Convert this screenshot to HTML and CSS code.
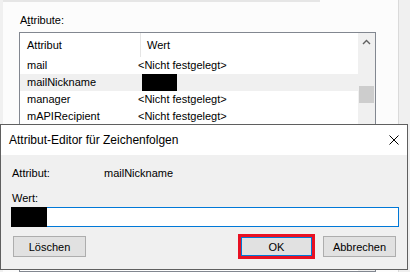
FILE: index.html
```html
<!DOCTYPE html>
<html lang="de">
<head>
  <meta charset="UTF-8" />
  <meta name="viewport" content="width=device-width, initial-scale=1" />
  <title>Attribut-Editor</title>
  <link rel="stylesheet" href="styles.css">
</head>
<body>
  <div class="page">
    <div class="strip"></div>
    <div class="label">A<u>t</u>tribute:</div>
    <div class="list">
      <div class="grid">
        <div class="head">
          <div class="hname">Attribut</div>
          <div class="hval">Wert</div>
        </div>
        <div class="row"><span class="name">mail</span><span class="val">&lt;Nicht festgelegt&gt;</span></div>
        <div class="row sel"><span class="name">mailNickname</span><span class="val"><span class="black"></span></span></div>
        <div class="row"><span class="name">manager</span><span class="val">&lt;Nicht festgelegt&gt;</span></div>
        <div class="row"><span class="name">mAPIRecipient</span><span class="val">&lt;Nicht festgelegt&gt;</span></div>
      </div>
      <div class="scrollbar">
        <div class="arrow">
          <svg width="9" height="6" viewBox="0 0 9 6"><polyline points="1,5 4.5,1.5 8,5" fill="none" stroke="#606060" stroke-width="1.4"/></svg>
        </div>
        <div class="thumb"></div>
      </div>
    </div>
  </div>

  <div class="dialog">
    <div class="titlebar">
      <span class="title">Attribut-Editor für Zeichenfolgen</span>
      <svg class="close" width="10" height="10" viewBox="0 0 10 10"><path d="M0.5 0.5 L9.5 9.5 M9.5 0.5 L0.5 9.5" stroke="#000" stroke-width="1"/></svg>
    </div>
    <div class="body">
      <div class="info"><span class="key">Attribut:</span><span>mailNickname</span></div>
      <div class="wert">Wert:</div>
      <div class="field"><span class="black-field"></span></div>
      <div class="buttons">
        <button class="btn">Löschen</button>
        <span class="spacer"></span>
        <button class="btn ok">OK</button>
        <button class="btn cancel">Abbrechen</button>
      </div>
    </div>
  </div>
</body>
</html>
```

FILE: styles.css
```css
body { margin: 0; width: 410px; height: 272px; overflow: hidden; background: #f0f0f0; font-family: "Liberation Sans", Arial, sans-serif; font-size: 11px; color: #000; }
u { text-decoration: underline; text-underline-offset: 1px; }

.page { margin-left: 3px; width: 395px; height: 272px; background: #fcfcfc; border-right: 1px solid #dadada; overflow: hidden; }
.strip { width: 317px; height: 2px; background: #e6e6e6; }
.label { margin: 11px 0 0 17px; line-height: 14px; }

.list { display: flex; margin: 5px 0 0 16px; width: 357px; height: 240px; box-sizing: border-box; border: 1px solid #828790; background: #fff; }
.grid { flex: 1; }
.head { display: flex; height: 24px; line-height: 24px; }
.hname { width: 113px; padding-left: 7px; border-right: 1px solid #e5e5e5; }
.hval { padding-left: 6px; }
.row { display: flex; height: 17px; line-height: 17px; }
.row.sel { background: #f0f0f0; }
.name { width: 111px; padding-left: 7px; white-space: nowrap; overflow: hidden; }
.val { white-space: nowrap; }
.black { display: inline-block; width: 35px; height: 17px; margin-left: 4px; background: #000; vertical-align: top; }

.scrollbar { width: 17px; background: #f0f0f0; }
.arrow { height: 17px; display: flex; align-items: center; justify-content: center; }
.thumb { width: 15px; height: 17px; margin: 36px 0 0 1px; background: #cdcdcd; }

.dialog { position: absolute; left: 0; top: 124px; width: 408px; height: 146px; box-sizing: border-box; border: 1px solid #5f5f5f; background: #f0f0f0; }
.titlebar { display: flex; align-items: center; justify-content: space-between; height: 30px; background: #fff; padding: 0 8px; }
.title { font-size: 12px; }
.body { padding: 11px 0 0 0; }
.info { display: flex; margin-left: 11px; line-height: 14px; }
.key { width: 92px; }
.wert { margin: 11px 0 0 11px; line-height: 14px; }
.field { position: relative; margin: 2px 0 0 10px; width: 388px; height: 20px; box-sizing: border-box; border: 1px solid #0078d7; background: #fff; }
.black-field { position: absolute; left: -1px; top: -1px; width: 36px; height: 20px; background: #000; }

.buttons { display: flex; margin: 9px 11px 0 12px; }
.spacer { flex: 1; }
.btn { width: 73px; height: 21px; padding: 0; border: 1px solid #adadad; background: #e1e1e1; font-family: inherit; font-size: 11px; color: #000; }
.ok { border-color: #0078d7; box-shadow: inset 0 0 0 1px #0078d7; outline: 3px solid #e81123; outline-offset: -1px; }
.cancel { margin-left: 10px; }
```
